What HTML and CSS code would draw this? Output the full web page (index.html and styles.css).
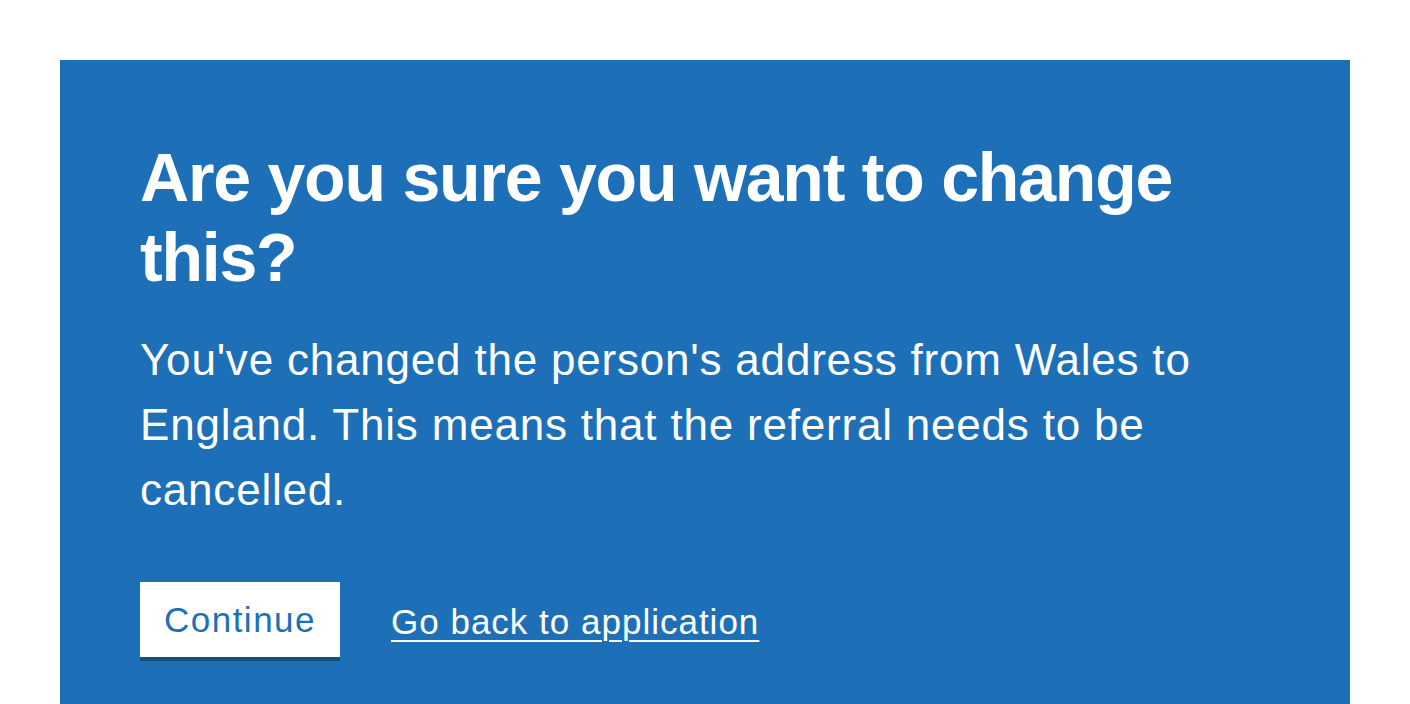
FILE: index.html
```html
<!DOCTYPE html>
<html lang="en">
<head>
<meta charset="utf-8">
<title>Are you sure you want to change this?</title>
<link rel="stylesheet" href="styles.css">
</head>
<body>
<main class="page">
  <div class="panel">
    <h1 class="panel-title">Are you sure you want to change this?</h1>
    <p class="panel-body">You've changed the person's address from Wales to England. This means that the referral needs to be cancelled.</p>
    <div class="actions">
      <button class="btn-continue" type="button">Continue</button>
      <a class="back-link" href="#">Go back to application</a>
    </div>
  </div>
</main>
</body>
</html>
```
FILE: styles.css
```css
html, body {
  margin: 0;
  padding: 0;
  background: #ffffff;
  font-family: "Liberation Sans", Arial, sans-serif;
}
.page {
  padding: 60px 60px 0;
}
.panel {
  background: #1d70b8;
  color: #ffffff;
  padding: 77px 80px 60px;
  min-height: 600px;
  box-sizing: border-box;
}
.panel-title {
  margin: 0 0 30px;
  font-size: 68px;
  line-height: 80px;
  font-weight: 700;
  letter-spacing: -1.2px;
}
.panel-body {
  margin: 0 0 60px;
  font-size: 44px;
  line-height: 65px;
  font-weight: 400;
  letter-spacing: 0.8px;
}
.actions {
  display: flex;
  align-items: center;
  gap: 51px;
}
.btn-continue {
  width: 200px;
  height: 75px;
  border: 0;
  background: #ffffff;
  color: #1d70b8;
  font-family: inherit;
  font-size: 35px;
  letter-spacing: 1.5px;
  box-shadow: 0 4px 0 #144e81;
  padding: 0;
  margin-bottom: 4px;
}
.back-link {
  color: #ffffff;
  font-size: 35px;
  letter-spacing: 1px;
  text-decoration: underline;
  text-decoration-thickness: 2px;
  text-underline-offset: 6px;
}
```
